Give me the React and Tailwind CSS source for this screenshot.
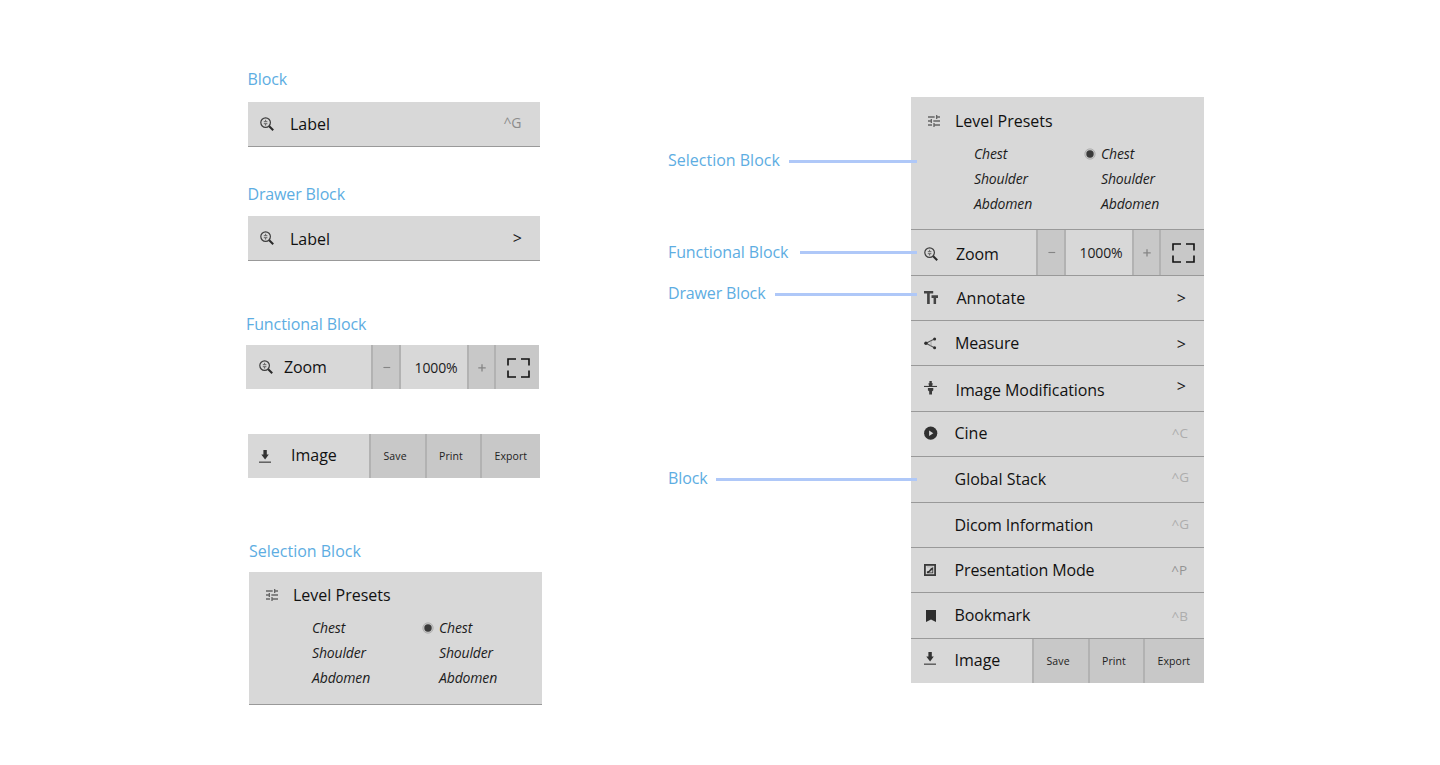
import React from 'react';
import { MdTune } from 'react-icons/md';

const FONT = "font-['Open_Sans','Noto_Sans',sans-serif]";

/* ---------- icons ---------- */

const ZoomIcon = () => (
  <svg width="14" height="14" viewBox="0 0 14 14" fill="none" className="block">
    <circle cx="5.6" cy="5.6" r="4.8" stroke="#3d3d3d" strokeWidth="1.2" />
    <path d="M9.2 9.2l4 4" stroke="#2a2a2a" strokeWidth="2" />
    <path d="M5.6 2.8v1.6M5.6 7v1.6M3.8 4.7h3.6M3.8 6.7h3.6" stroke="#555" strokeWidth="0.9" />
  </svg>
);

const DownloadIcon = () => (
  <svg width="12" height="13" viewBox="0 0 12 13" className="block" fill="#333">
    <path d="M4.4 0h3.4v4.6h2L6.1 9.4 2.3 4.6h2.1z" />
    <path d="M0 11.6h12v1.1H0z" />
  </svg>
);

const TextIcon = () => (
  <svg width="14" height="13" viewBox="2.5 4 19 15" preserveAspectRatio="none" className="block" fill="#444">
    <path d="M2.5 4v3h4.2v12h3.6V7h4.7V4zM21.5 9h-8.8v3h2.8v7h3.4v-7h2.6z" />
  </svg>
);

const MeasureIcon = () => (
  <svg width="13" height="13" viewBox="0 0 13 13" className="block">
    <path d="M2 6.3L10.4 2M2 6.3l8.4 4.4" stroke="#555" strokeWidth="1.1" />
    <path d="M7 4v5" stroke="#999" strokeWidth="0.8" />
    <g fill="#2e2e2e">
      <circle cx="1.9" cy="6.3" r="1.7" />
      <circle cx="10.6" cy="1.9" r="1.5" />
      <circle cx="10.6" cy="10.7" r="1.5" />
    </g>
  </svg>
);

const ModifyIcon = () => (
  <svg width="13" height="14" viewBox="0 0 13 14" className="block" fill="#3a3a3a">
    <path d="M5.4 0h2.4v2.2h1L8.2 5H5L4.4 2.2h1z" />
    <path d="M0 4.9h13v1.1H0z" />
    <path d="M3.9 7h5.4v2.2L8 10.4v3H5.2v-3L3.9 9.2z" />
  </svg>
);

const PlayIcon = () => (
  <svg width="14" height="14" viewBox="0 0 14 14" className="block">
    <circle cx="6.7" cy="7.2" r="6.6" fill="#303030" />
    <path d="M5.1 4.5v5.4l4.2-2.7z" fill="#d8d8d8" />
  </svg>
);

const PresentIcon = () => (
  <svg width="12" height="12" viewBox="0 0 12 12" className="block">
    <rect x="0.9" y="0.9" width="10.2" height="10.2" fill="none" stroke="#3a3a3a" strokeWidth="1.8" />
    <path d="M2.9 9.2V7.6l2-.9L6.6 4.4l2.6-1.5v6.3z" fill="#333" />
    <path d="M5 8.6l3.4-3v3z" fill="#c4c4c4" />
    <path d="M2.9 2.9h6.3" stroke="#999" strokeWidth="0.6" />
  </svg>
);

const BookmarkIcon = () => (
  <svg width="10" height="12" viewBox="0 0 10 12" className="block" fill="#2e2e2e">
    <path d="M0 0h10v12L5 9.4 0 12z" />
  </svg>
);

const FullscreenIcon = () => (
  <svg width="23" height="20" viewBox="0 0 23 20" className="block" fill="none" stroke="#111" strokeWidth="1.6">
    <path d="M9 1H1v6.6M14 1h8v6.6M1 12.4V19h8M22 12.4V19h-8" />
  </svg>
);

const RadioIcon = () => (
  <svg width="12" height="12" viewBox="0 0 12 12" className="block">
    <circle cx="6" cy="6" r="5.2" fill="#c6c6c6" stroke="#a9a9a9" strokeWidth="0.8" />
    <circle cx="6" cy="6" r="3.7" fill="#3a3a3a" />
  </svg>
);

const MinusIcon = () => (
  <svg width="8" height="9" viewBox="0 0 8 9" className="block" stroke="#858585" strokeWidth="1.1">
    <path d="M0.4 4.5h6.8" />
  </svg>
);

const PlusIcon = () => (
  <svg width="8" height="9" viewBox="0 0 8 9" className="block" stroke="#858585" strokeWidth="1.3">
    <path d="M0.3 4.9h7.4M4 1.2v7.4" />
  </svg>
);

/* ---------- blocks ---------- */

function Title({ children, className }) {
  return <h2 className={`whitespace-nowrap text-base leading-5 text-[#5dade2] ${className}`}>{children}</h2>;
}

function Lead({ icon, iconClass, label, labelClass }) {
  return (
    <>
      <div className={`w-[30px] shrink-0 ${iconClass}`}>{icon}</div>
      <div className={`whitespace-nowrap text-base leading-5 text-[#111] ${labelClass}`}>{label}</div>
    </>
  );
}

function Row({ className, right, rightClass, ...lead }) {
  return (
    <div className={`flex items-start border-b bg-[#d8d8d8] ${className}`}>
      <Lead {...lead} />
      <div className={`ml-auto whitespace-nowrap leading-5 ${rightClass}`}>{right}</div>
    </div>
  );
}

function ZoomBlock({ className, controlClass, ...lead }) {
  const cell = 'border-l-2 border-[#b2b2b2] flex shrink-0';
  return (
    <div className={`flex bg-[#d8d8d8] ${className}`}>
      <div className="flex w-[125px] shrink-0 items-start pl-[13px]">
        <Lead icon={<ZoomIcon />} label="Zoom" {...lead} />
      </div>
      <div className={`w-[28px] bg-[#c8c8c8] pl-[10px] ${cell}`}>
        <div className={`pt-[5px] ${controlClass}`}><MinusIcon /></div>
      </div>
      <div className={`w-[68px] pl-[13.5px] ${cell}`}>
        <div className={`text-sm leading-5 tracking-[-0.1px] text-[#1c1c1c] ${controlClass}`}>1000%</div>
      </div>
      <div className={`w-[27px] bg-[#c8c8c8] pl-[9px] ${cell}`}>
        <div className={`pt-[5px] ${controlClass}`}><PlusIcon /></div>
      </div>
      <div className={`w-[45px] bg-[#c8c8c8] pl-[10.5px] ${cell}`}>
        <div className={controlClass}><FullscreenIcon /></div>
      </div>
    </div>
  );
}

function ImageBlock({ className, actionClass, ...lead }) {
  const cell = 'border-l-2 border-[#b2b2b2] bg-[#c8c8c8] shrink-0 text-[10.5px] leading-5 tracking-[0.1px] text-[#222]';
  return (
    <div className={`flex bg-[#d8d8d8] ${className}`}>
      <div className="flex w-[121px] shrink-0 items-start pl-[13px]">
        <Lead icon={<DownloadIcon />} label="Image" {...lead} />
      </div>
      <div className={`w-[56px] pl-[12.5px] ${cell}`}><div className={actionClass}>Save</div></div>
      <div className={`w-[55px] pl-[12px] ${cell}`}><div className={actionClass}>Print</div></div>
      <div className={`grow pl-[12.5px] ${cell}`}><div className={actionClass}>Export</div></div>
    </div>
  );
}

function Options({ selected }) {
  return (
    <div className="w-[127px] shrink-0 text-sm italic leading-[25px] tracking-[-0.15px] text-[#1c1c1c]">
      <div className="flex h-[25px]">
        <div className="w-[17px] shrink-0 pt-[7px]">{selected && <RadioIcon />}</div>
        <div>Chest</div>
      </div>
      <div className="h-[25px] pl-[17px]">Shoulder</div>
      <div className="h-[25px] pl-[17px]">Abdomen</div>
    </div>
  );
}

function PresetBlock({ className, headClass, listClass }) {
  return (
    <div className={`h-[133px] overflow-hidden border-b border-[#999] bg-[#d8d8d8] ${className}`}>
      <div className={`flex h-[33px] items-start ${headClass}`}>
        <MdTune className="mt-[2px] block h-4 w-4 text-[#666]" />
        <div className="ml-[13px] text-base leading-5 text-[#111]">Level Presets</div>
      </div>
      <div className={`flex pl-[46px] ${listClass}`}>
        <Options />
        <Options selected />
      </div>
    </div>
  );
}

function Callout({ children, className, titleClass = '', lineClass }) {
  return (
    <div className={`flex items-start ${className}`}>
      <Title className={`shrink-0 ${titleClass}`}>{children}</Title>
      <div className={`ml-auto h-[2.5px] bg-[#afc8f8] ${lineClass}`} />
    </div>
  );
}

const arrow = 'text-base font-medium text-[#1a1a1a] pr-[18px]';
const key = 'text-[13.5px] text-[#adadad]';

export default function App() {
  return (
    <main className={`flex h-[765px] w-[1440px] items-start overflow-hidden bg-white ${FONT}`}>
      <section className="ml-[246px] w-[296px] shrink-0 pt-[69px]">
        <Title className="ml-[1.5px] h-[33px] tracking-[-0.1px]">Block</Title>
        <Row className="ml-[2px] h-[45px] w-[292px] border-[#999] pl-[12px]"
          icon={<ZoomIcon />} iconClass="mt-[15px]" label="Label" labelClass="mt-[12px]"
          right="^G" rightClass="mt-[11px] pr-[19px] text-sm text-[#8c8c8c] tracking-[-0.4px]" />
        <Title className="ml-[1.5px] mt-[37px] h-[32px] tracking-[-0.15px]">Drawer Block</Title>
        <Row className="ml-[2px] h-[45px] w-[292px] border-[#999] pl-[12px]"
          icon={<ZoomIcon />} iconClass="mt-[15px]" label="Label" labelClass="mt-[13px]"
          right=">" rightClass={`mt-[12px] ${arrow}`} />
        <Title className="mt-[53px] h-[31px] tracking-[-0.1px]">Functional Block</Title>
        <ZoomBlock className="h-[44px] w-[293px]" iconClass="mt-[15px]" labelClass="mt-[12px] -ml-[5px] tracking-[-0.15px]" controlClass="mt-[12.5px]" />
        <ImageBlock className="ml-[2px] mt-[45px] h-[44px] w-[292px]" iconClass="mt-[16px] -ml-[2px]" labelClass="mt-[11px] ml-[2px]" actionClass="mt-[12px]" />
        <Title className="ml-[3px] mt-[63px] h-[31px]">Selection Block</Title>
        <PresetBlock className="ml-[3px] w-[293px]" headClass="pl-[15px] pt-[13px]" listClass="pt-[10px]" />
      </section>

      <section className="relative z-10 -mr-[6px] ml-[126px] w-[249px] shrink-0 pt-[150px]">
        <Callout className="h-[92px]" lineClass="mt-[10px] w-[128px]">Selection Block</Callout>
        <Callout className="h-[41px]" titleClass="tracking-[-0.1px]" lineClass="mt-[9px] w-[117px]">Functional Block</Callout>
        <Callout className="h-[185px]" titleClass="tracking-[-0.15px]" lineClass="mt-[10px] w-[142px]">Drawer Block</Callout>
        <Callout className="h-[20px]" titleClass="tracking-[-0.1px]" lineClass="mt-[10px] w-[201px]">Block</Callout>
      </section>

      <section className="mt-[97px] w-[293px] shrink-0">
        <PresetBlock headClass="pl-[15px] pt-[14px]" listClass="pt-[11px]" />
        <ZoomBlock className="h-[46px] border-b border-[#999]" iconClass="mt-[17px]" labelClass="mt-[14px] ml-[2px] tracking-[-0.15px]" controlClass="mt-[13px]" />
        <Row className="h-[45px] border-[#999] pl-[13px]" icon={<TextIcon />} iconClass="mt-[15px]" label="Annotate" labelClass="mt-[12px] ml-[2.5px]" right=">" rightClass={`mt-[12px] ${arrow}`} />
        <Row className="h-[45px] border-[#999] pl-[13px]" icon={<MeasureIcon />} iconClass="mt-[16px]" label="Measure" labelClass="mt-[12px] ml-px tracking-[-0.15px]" right=">" rightClass={`mt-[13px] ${arrow}`} />
        <Row className="h-[46px] border-[#999] pl-[13px]" icon={<ModifyIcon />} iconClass="mt-[15px]" label="Image Modifications" labelClass="mt-[14px] ml-[1.5px] tracking-[-0.08px]" right=">" rightClass={`mt-[10px] ${arrow}`} />
        <Row className="h-[45px] border-[#999] pl-[13px]" icon={<PlayIcon />} iconClass="mt-[14px]" label="Cine" labelClass="mt-[11px] ml-[0.5px]" right="^C" rightClass={`mt-[11px] pr-[16px] ${key}`} />
        <Row className="h-[46px] border-[#999] pl-[13px]" iconClass="" label="Global Stack" labelClass="mt-[12px] ml-[0.5px]" right="^G" rightClass={`mt-[10px] pr-[15px] ${key}`} />
        <Row className="h-[45px] border-[#999] pl-[13px]" iconClass="" label="Dicom Information" labelClass="mt-[12px] ml-[0.5px] tracking-[-0.12px]" right="^G" rightClass={`mt-[11px] pr-[15px] ${key}`} />
        <Row className="h-[45px] border-[#999] pl-[13px]" icon={<PresentIcon />} iconClass="mt-[16px]" label="Presentation Mode" labelClass="mt-[12px] ml-[0.5px] tracking-[-0.14px]" right="^P" rightClass="mt-[12px] pr-[17px] text-[13.5px] text-[#949494]" />
        <Row className="h-[46px] border-[#999] pl-[13px]" icon={<BookmarkIcon />} iconClass="mt-[17px] pl-[1.5px]" label="Bookmark" labelClass="mt-[12px] ml-[0.5px] tracking-[-0.12px]" right="^B" rightClass={`mt-[13px] pr-[16px] ${key}`} />
        <ImageBlock className="h-[44px]" iconClass="mt-[13px]" labelClass="mt-[11px] ml-[0.5px]" actionClass="mt-[12px]" />
      </section>
    </main>
  );
}
